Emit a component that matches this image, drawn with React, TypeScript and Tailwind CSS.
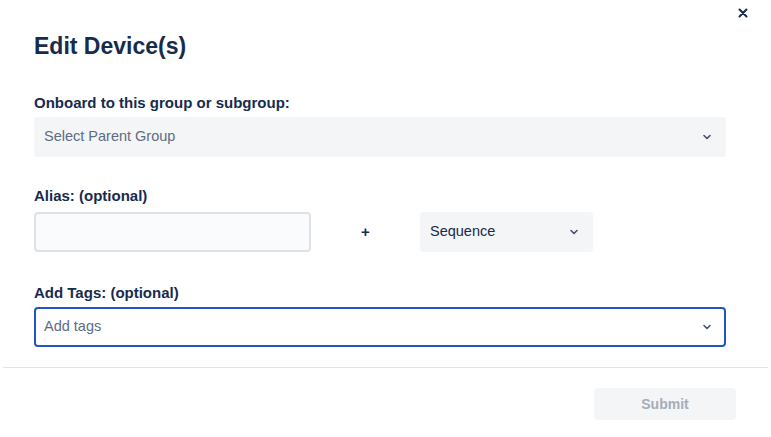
import React from 'react';

function Chevron({ className }: { className?: string }) {
  return (
    <svg viewBox="0 0 10 6" className={className} fill="none">
      <path d="M2 1.5 L5 4.5 L8 1.5" stroke="currentColor" strokeWidth="1.6" strokeLinecap="round" strokeLinejoin="round" />
    </svg>
  );
}

export default function App() {
  return (
    <div
      className="relative w-[771px] h-[437px] bg-white text-[#172b4d]"
      style={{ fontFamily: '"Liberation Sans", Arial, sans-serif' }}
    >
      <button className="absolute top-[4px] right-[19px] p-1" aria-label="Close">
        <svg viewBox="0 0 10 10" className="w-[10px] h-[10px]" fill="none">
          <path d="M1.5 1.5 L8.5 8.5 M8.5 1.5 L1.5 8.5" stroke="currentColor" strokeWidth="2" strokeLinecap="round" />
        </svg>
      </button>

      <div className="px-[34px] pt-[32px]">
        <h2 className="text-[23px] leading-[28px] font-semibold">Edit Device(s)</h2>

        <div className="mt-[33px]">
          <label className="block text-[15px] leading-[19px] font-bold">Onboard to this group or subgroup:</label>
          <div className="mt-[5px] h-[40px] w-[692px] rounded bg-[#f4f5f7] flex items-center justify-between pl-[10px] pr-[14px] text-[14.5px] text-[#5e6c84]">
            <span>Select Parent Group</span>
            <Chevron className="w-[10px] h-[6px] text-[#42526e]" />
          </div>
        </div>

        <div className="mt-[29px]">
          <label className="block text-[15px] leading-[19px] font-bold">Alias: (optional)</label>
          <div className="mt-[7px] flex items-center">
            <input className="h-[40px] w-[277px] rounded border-2 border-[#dfe1e6] bg-[#fafbfc] outline-none" />
            <span className="w-[109px] text-center text-[15px] font-bold">+</span>
            <div className="h-[40px] w-[173px] rounded bg-[#f4f5f7] flex items-center justify-between pl-[10px] pr-[14px] text-[14.5px]">
              <span>Sequence</span>
              <Chevron className="w-[10px] h-[6px] text-[#42526e]" />
            </div>
          </div>
        </div>

        <div className="mt-[31px]">
          <label className="block text-[15px] leading-[19px] font-bold">Add Tags: (optional)</label>
          <div className="mt-[5px] h-[40px] w-[692px] rounded border-2 border-[#2154c4] bg-white flex items-center justify-between pl-[8px] pr-[12px] text-[14.5px] text-[#5e6c84]">
            <span>Add tags</span>
            <Chevron className="w-[10px] h-[6px] text-[#42526e]" />
          </div>
        </div>
      </div>

      <div className="mt-[20px] mx-[3px] border-t border-[#e1e3e6]" />

      <div className="flex justify-end pr-[35px] pt-[20px]">
        <button className="h-[32px] w-[142px] rounded bg-[#f4f5f7] text-[14px] font-semibold text-[#a5adba]">Submit</button>
      </div>
    </div>
  );
}
